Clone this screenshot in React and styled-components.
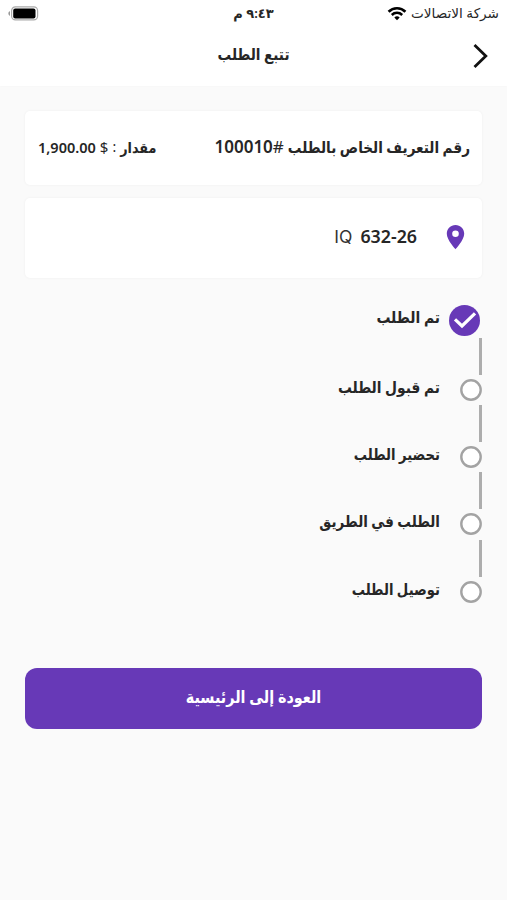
import styled, { createGlobalStyle } from "styled-components";

const GlobalStyle = createGlobalStyle`
  * {
    box-sizing: border-box;
  }
  body {
    margin: 0;
    background-color: #fafafa;
    font-family: "Noto Sans", "DejaVu Sans", sans-serif;
    color: #262626;
  }
`;

const Screen = styled.div`
  direction: rtl;
  display: flex;
  flex-direction: column;
  width: 100%;
  min-height: 900px;
  background-color: #fafafa;
`;

const Top = styled.header`
  height: 86px;
  background-color: #fff;
  box-shadow: 0 0 2px rgba(0, 0, 0, 0.03);
`;

const StatusBar = styled.div`
  display: grid;
  grid-template-columns: 1fr auto 1fr;
  align-items: center;
  height: 26px;
  padding: 0 8px;
`;

const Carrier = styled.div`
  display: flex;
  align-items: center;
  gap: 4px;
`;

const BatterySlot = styled.div`
  display: flex;
  justify-content: flex-end;
`;

const TitleBar = styled.div`
  display: grid;
  grid-template-columns: 60px 1fr 60px;
  align-items: center;
  height: 60px;
`;

const BackButton = styled.button`
  display: flex;
  padding: 0 19px 0 0;
  border: 0;
  background: none;
  color: #111;
`;

const Title = styled.h1`
  display: flex;
  justify-content: center;
  margin: 0;
  padding-bottom: 4px;
`;

const Text = styled.span`
  font-size: ${(props) => props.$size}px;
  font-weight: ${(props) => props.$weight || 700};
  line-height: 20px;
  white-space: nowrap;
`;

/* narrow, tall Arabic headings */
const TallText = styled(Text)`
  display: inline-block;
  transform: scaleY(1.16);
`;

const Content = styled.main`
  padding: 25px 25px 0;
`;

const Card = styled.section`
  display: flex;
  align-items: center;
  justify-content: ${(props) => (props.$spread ? "space-between" : "flex-start")};
  height: ${(props) => props.$height}px;
  margin-bottom: 13px;
  padding: 0 12px 3px 13px;
  border-radius: 5px;
  background-color: #fff;
  box-shadow: 0 0 3px rgba(0, 0, 0, 0.05);
`;

const Line = styled.div`
  display: flex;
  align-items: center;
  gap: 4px;
`;

const OrderNumber = styled.div`
  display: flex;
  align-items: center;
`;

const Pin = styled.svg`
  margin: 0 5px 0 29px;
`;

const Address = styled.div`
  display: flex;
  direction: ltr;
  align-items: baseline;
  gap: 8px;
  padding-bottom: 1px;
`;

const Country = styled.span`
  font-family: Inter, sans-serif;
  font-size: 17.5px;
  line-height: 20px;
  color: #333;
`;

const Steps = styled.ol`
  margin: 24px 0 0;
  padding: 0;
  list-style: none;
`;

const StepRow = styled.div`
  display: flex;
  align-items: center;
  height: ${(props) => (props.$done ? 36 : 30.2)}px;
`;

const StepLabel = styled(TallText)`
  padding-bottom: 4px;
`;

const Marker = styled.div`
  display: flex;
  width: 42px;
  padding-right: ${(props) => (props.$done ? 2 : 0)}px;
`;

const DoneDot = styled.div`
  display: flex;
  align-items: center;
  justify-content: center;
  width: 31px;
  height: 31px;
  border-radius: 50%;
  background-color: #6739b7;
`;

const EmptyDot = styled.svg`
  display: block;
`;

const Connector = styled.div`
  width: 3px;
  height: 37px;
  background-color: #adadad;
`;

const HomeButton = styled.button`
  display: flex;
  align-items: center;
  justify-content: center;
  width: 100%;
  height: 61px;
  margin-top: 61px;
  padding: 0 0 3px;
  border: 0;
  border-radius: 12px;
  background-color: #6739b7;
  color: #fff;
  font-family: inherit;
`;

const steps = [
  { label: "تم الطلب", size: 13.9, done: true },
  { label: "تم قبول الطلب", size: 13.8 },
  { label: "تحضير الطلب", size: 13.2 },
  { label: "الطلب في الطريق", size: 13.5 },
  { label: "توصيل الطلب", size: 13.2 },
];

function Wifi() {
  return (
    <svg width="20" height="15" viewBox="0 0 20 15" fill="none" stroke="#000">
      <path d="M1.6 5.7a12 12 0 0 1 16.8 0" strokeWidth="2.7" />
      <path d="M4.8 9a7.4 7.4 0 0 1 10.4 0" strokeWidth="2.5" />
      <path d="M10 14.3l-2.7-2.8a3.8 3.8 0 0 1 5.4 0z" fill="#000" stroke="none" />
    </svg>
  );
}

function Battery() {
  return (
    <svg width="31" height="15" viewBox="0 0 31 15">
      <path d="M2 5.3v4.4C-.2 9.2-.2 5.8 2 5.3z" fill="#999" />
      <rect x="3.6" y=".9" width="26" height="13" rx="3.8" fill="#fff" stroke="#aaa" strokeWidth="1.2" />
      <rect x="5.2" y="2.6" width="22.3" height="9.8" rx="2" fill="#000" />
    </svg>
  );
}

function Step({ label, size, done, last }) {
  return (
    <li>
      <StepRow $done={done}>
        <Marker $done={done}>
          {done ? (
            <DoneDot>
              <svg width="24" height="18" viewBox="0 0 24 18" fill="none">
                <path d="M2 8.4l7 6.6L22 2.4" stroke="#fff" strokeWidth="3.2" />
              </svg>
            </DoneDot>
          ) : (
            <EmptyDot width="22" height="22" viewBox="0 0 22 22">
              <circle cx="11" cy="11" r="9.7" fill="#fff" stroke="#a3a3a3" strokeWidth="2.4" />
            </EmptyDot>
          )}
        </Marker>
        <StepLabel $size={size}>{label}</StepLabel>
      </StepRow>
      {!last && <Connector />}
    </li>
  );
}

function App() {
  return (
    <>
      <GlobalStyle />
      <Screen>
        <Top>
          <StatusBar>
            <Carrier>
              <Text $size={13.6} $weight={400}>شركة الاتصالات</Text>
              <Wifi />
            </Carrier>
            <Text $size={13} $weight={600}>٩:٤٣ م</Text>
            <BatterySlot>
              <Battery />
            </BatterySlot>
          </StatusBar>
          <TitleBar>
            <BackButton aria-label="رجوع">
              <svg width="15" height="26" viewBox="0 0 15 26" fill="none">
                <path d="M1.5 2l11.3 11L1.5 24" stroke="currentColor" strokeWidth="2.8" />
              </svg>
            </BackButton>
            <Title>
              <TallText $size={13.6}>تتبع الطلب</TallText>
            </Title>
          </TitleBar>
        </Top>
        <Content>
          <Card $height={74} $spread>
            <Line>
              <TallText $size={13.6}>رقم التعريف الخاص بالطلب</TallText>
              <OrderNumber>
                <Text $size={17} $weight={400}>#</Text>
                <Text $size={17} $weight={600}>100010</Text>
              </OrderNumber>
            </Line>
            <Line>
              <TallText $size={12.8}>مقدار</TallText>
              <Text $size={14} $weight={400}>:</Text>
              <Text $size={15} $weight={400}>$</Text>
              <Text $size={14.5} $weight={600}>1,900.00</Text>
            </Line>
          </Card>
          <Card $height={80}>
            <Pin width="19" height="26" viewBox="0 0 19 26">
              <path
                d="M9.5 1C4.7 1 .8 4.8.8 9.7c0 6.2 8.7 15.5 8.7 15.5s8.7-9.3 8.7-15.5C18.2 4.8 14.3 1 9.5 1zm0 12a3.3 3.3 0 1 1 0-6.6 3.3 3.3 0 0 1 0 6.6z"
                fill="#6739b7"
              />
            </Pin>
            <Address>
              <Country>IQ</Country>
              <Text $size={17.8} $weight={600}>632-26</Text>
            </Address>
          </Card>
          <Steps>
            {steps.map((step, i) => (
              <Step key={step.label} {...step} last={i === steps.length - 1} />
            ))}
          </Steps>
          <HomeButton>
            <TallText $size={14.4}>العودة إلى الرئيسية</TallText>
          </HomeButton>
        </Content>
      </Screen>
    </>
  );
}

export default App;
